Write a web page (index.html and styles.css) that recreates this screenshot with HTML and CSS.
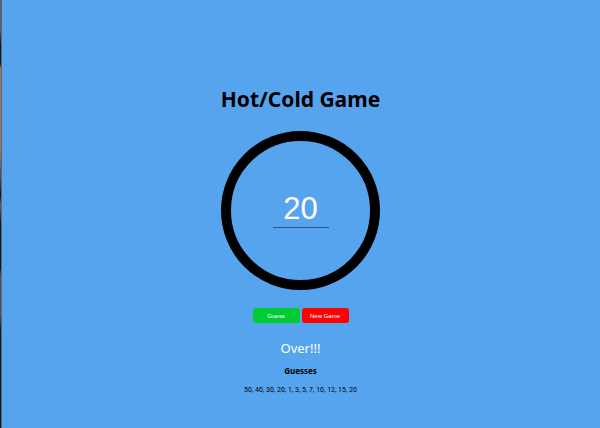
FILE: index.html
```html
<!DOCTYPE html>
<html lang="en">
<head>
<meta charset="utf-8">
<title>Hot/Cold Game</title>
<link rel="stylesheet" href="styles.css">
</head>
<body>
<main class="game">
  <h1 class="title">Hot/Cold Game</h1>
  <form class="form">
    <div class="dial">
      <input class="number" type="text" value="20" aria-label="Your guess">
    </div>
    <div class="actions">
      <button class="button guess" type="submit">Guess</button>
      <button class="button new-game" type="button">New Game</button>
    </div>
  </form>
  <p class="feedback">Over!!!</p>
  <h2 class="subtitle">Guesses</h2>
  <p class="history">50, 40, 30, 20, 1, 3, 5, 7, 10, 12, 15, 20</p>
</main>
</body>
</html>
```

FILE: styles.css
```css
* {
  box-sizing: border-box;
}

body {
  display: flex;
  min-height: 100vh;
  margin: 0;
  background: #57a4ee;
  color: #000;
  font-family: "Noto Sans", "Open Sans", sans-serif;
}

/* sliver of the desktop showing beside the window */
body::before {
  content: "";
  width: 1px;
  background: linear-gradient(#82503f 0, #82503f 30px, #1a1512 45px, #1a1512 64px, #bd6f35 68px, #bd6f35 150px, #6e3c2a 180px, #17110f 195px, #9a5335 205px, #17110f 225px, #17110f 268px, #7c4534 275px, #7c4534 315px, #17110f 330px);
  box-shadow: 1px 0 #3c719f;
}

.game {
  flex: 1;
  display: flex;
  flex-direction: column;
  align-items: center;
  padding-top: 84px;
}

.title,
.subtitle,
.feedback,
.history {
  margin: 0;
}

.title {
  margin-bottom: 17px;
  font-size: 21px;
  line-height: 30px;
}

.form {
  display: flex;
  flex-direction: column;
  align-items: center;
  gap: 18px;
}

.dial {
  display: flex;
  align-items: center;
  justify-content: center;
  width: 159px;
  height: 159px;
  border: 10px solid #000;
  border-radius: 50%;
}

.number {
  width: 56px;
  height: 38px;
  margin-bottom: 4px;
  padding: 1px 0 0;
  border: 0;
  border-bottom: 1px solid #2b5378;
  background: transparent;
  color: #fff;
  font: 31px "Liberation Sans", sans-serif;
  text-align: center;
}

.actions {
  display: flex;
  gap: 2px;
}

.button {
  width: 47px;
  height: 15px;
  padding: 0;
  border: 0;
  border-radius: 3px;
  color: #fff;
  font: 6px "Liberation Sans", sans-serif;
}

.guess {
  background: #00cb32;
}

.new-game {
  background: #f00;
}

.feedback {
  margin-top: 16px;
  color: #fff;
  font-size: 13px;
  line-height: 18px;
}

.subtitle {
  margin-top: 8px;
  font-size: 8px;
  line-height: 12px;
}

.history {
  margin-top: 7px;
  font-family: Roboto, sans-serif;
  font-size: 7px;
  line-height: 12px;
}
```
